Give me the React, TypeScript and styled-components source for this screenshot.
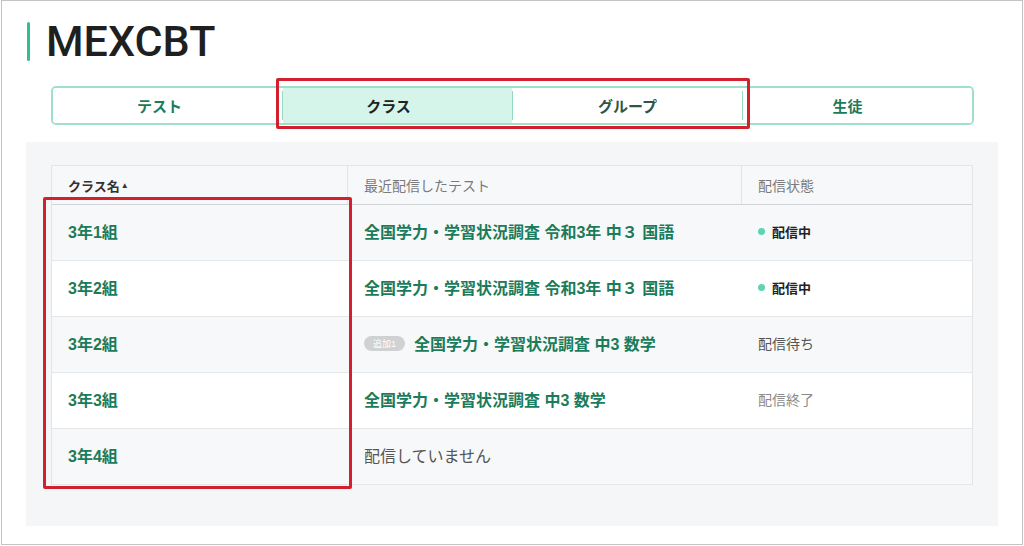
import React from 'react';
import styled, { createGlobalStyle } from 'styled-components';

const GlobalStyle = createGlobalStyle`
  html, body {
    margin: 0;
    padding: 0;
    background: #ffffff;
  }
  body {
    font-family: 'Liberation Sans', 'Noto Sans CJK JP', sans-serif;
  }
`;

type Status = 'live' | 'waiting' | 'ended' | 'none';

interface Row {
  name: string;
  test?: string;
  badge?: string;
  status: Status;
}

const rows: Row[] = [
  { name: '3年1組', test: '全国学力・学習状況調査 令和3年 中３ 国語', status: 'live' },
  { name: '3年2組', test: '全国学力・学習状況調査 令和3年 中３ 国語', status: 'live' },
  { name: '3年2組', test: '全国学力・学習状況調査 中3 数学', badge: '追加1', status: 'waiting' },
  { name: '3年3組', test: '全国学力・学習状況調査 中3 数学', status: 'ended' },
  { name: '3年4組', status: 'none' },
];

const tabs = [
  { label: 'テスト', tone: 'green', shift: -8 },
  { label: 'クラス', tone: 'active', shift: -9 },
  { label: 'グループ', tone: 'dark', shift: 0 },
  { label: '生徒', tone: 'green', shift: -10 },
] as const;

const App: React.FC = () => {
  return (
    <>
      <GlobalStyle />
      <Frame>
        <Header>
          <Bar />
          <Title>MEXCBT</Title>
        </Header>

        <Tabs>
          {tabs.map((t, i) => (
            <React.Fragment key={t.label}>
              {i > 0 && <Divider />}
              <Tab tone={t.tone}>
                <TabLabel shift={t.shift}>{t.label}</TabLabel>
              </Tab>
            </React.Fragment>
          ))}
        </Tabs>

        <Panel>
          <Table>
            <HeadCell strong>
              クラス名<Caret>▲</Caret>
            </HeadCell>
            <HeadCell>最近配信したテスト</HeadCell>
            <HeadCell last>配信状態</HeadCell>

            {rows.map((r, i) => (
              <React.Fragment key={i}>
                <Cell shaded={i % 2 === 0}>
                  <ClassName>{r.name}</ClassName>
                </Cell>
                <Cell shaded={i % 2 === 0}>
                  {r.badge && <Badge>{r.badge}</Badge>}
                  {r.test ? <TestName>{r.test}</TestName> : <Empty>配信していません</Empty>}
                </Cell>
                <Cell shaded={i % 2 === 0}>
                  {r.status === 'live' && (
                    <Live>
                      <Dot />
                      配信中
                    </Live>
                  )}
                  {r.status === 'waiting' && <StatusText tone="#555">配信待ち</StatusText>}
                  {r.status === 'ended' && <StatusText tone="#8a8a8a">配信終了</StatusText>}
                </Cell>
              </React.Fragment>
            ))}
          </Table>
        </Panel>

        <Highlight style={{ left: 274, top: 77, width: 474, height: 51 }} />
        <Highlight style={{ left: 41, top: 196, width: 309, height: 292 }} />
      </Frame>
    </>
  );
};

export default App;

const Frame = styled.div`
  position: relative;
  box-sizing: border-box;
  width: 1022px;
  height: 545px;
  margin: 0 0 0 1px;
  border: 1px solid #c4c4c4;
  background: #ffffff;
  padding-top: 21px;
`;

const Header = styled.div`
  display: flex;
  align-items: center;
  gap: 16px;
  height: 39px;
  margin-left: 25px;
`;

const Bar = styled.div`
  width: 3px;
  height: 39px;
  border-radius: 2px;
  background: #2fbf8c;
`;

const Title = styled.h1`
  margin: 0;
  font-family: Roboto, 'Liberation Sans', sans-serif;
  font-weight: 500;
  font-size: 43px;
  line-height: 1;
  color: #1f1f1f;
`;

const Tabs = styled.div`
  display: flex;
  align-items: stretch;
  box-sizing: border-box;
  height: 39px;
  margin: 25px 48px 0 49px;
  border: 2px solid #9fe0ca;
  border-radius: 5px;
  overflow: hidden;
`;

const Tab = styled.div<{ tone: 'green' | 'active' | 'dark' }>`
  flex: 1;
  display: flex;
  align-items: center;
  justify-content: center;
  font-family: 'Noto Sans CJK JP', sans-serif;
  font-size: 15px;
  font-weight: 700;
  background: ${p => (p.tone === 'active' ? '#d5f5ea' : '#ffffff')};
  color: ${p => (p.tone === 'active' ? '#222222' : p.tone === 'dark' ? '#2e5546' : '#1b7b5a')};
`;

const TabLabel = styled.span<{ shift: number }>`
  margin-left: ${p => p.shift * 2}px;
`;

const Divider = styled.div`
  width: 1px;
  height: 29px;
  align-self: center;
  background: #95d9c2;
`;

const Panel = styled.div`
  box-sizing: border-box;
  width: 972px;
  height: 384px;
  margin: 17px 0 0 24px;
  padding: 23px 25px 0 25px;
  background: #f5f6f7;
`;

const Table = styled.div`
  display: grid;
  grid-template-columns: 296px 394px 230px;
  grid-auto-rows: 56px;
  grid-template-rows: 39px;
  border: 1px solid #e2e5e7;
  border-bottom: none;
  background: #ffffff;
`;

const HeadCell = styled.div<{ strong?: boolean; last?: boolean }>`
  display: flex;
  align-items: center;
  padding: 0 16px;
  background: #f7f8f9;
  border-bottom: 1px solid #cfd3d6;
  border-right: ${p => (p.last ? 'none' : '1px solid #e2e5e7')};
  font-family: 'Liberation Sans', 'Noto Sans CJK JP', sans-serif;
  font-size: ${p => (p.strong ? '13px' : '14px')};
  font-weight: ${p => (p.strong ? 700 : 400)};
  color: ${p => (p.strong ? '#333333' : '#7a7a7a')};
`;

const Caret = styled.span`
  font-size: 8px;
  margin-left: 1px;
  color: #333333;
`;

const Cell = styled.div<{ shaded: boolean }>`
  display: flex;
  align-items: center;
  padding: 0 16px 3px;
  background: ${p => (p.shaded ? '#f7f8f9' : '#ffffff')};
  border-bottom: 1px solid #e4e7e9;
`;

const ClassName = styled.span`
  font-size: 16px;
  font-weight: 700;
  color: #1b7b5a;
`;

const TestName = styled.span`
  font-size: 16px;
  font-weight: 700;
  color: #1b7b5a;
  white-space: nowrap;
`;

const Empty = styled.span`
  font-size: 16px;
  color: #555555;
`;

const Badge = styled.span`
  display: inline-flex;
  align-items: center;
  justify-content: center;
  height: 15px;
  padding: 0 9px;
  margin-right: 9px;
  border-radius: 8px;
  background: #cfd1d2;
  color: #ffffff;
  font-size: 9px;
`;

const Live = styled.span`
  display: inline-flex;
  align-items: center;
  font-size: 13px;
  font-weight: 700;
  color: #222222;
`;

const Dot = styled.span`
  width: 7px;
  height: 7px;
  border-radius: 50%;
  background: #5ed4b5;
  margin-right: 7px;
`;

const StatusText = styled.span<{ tone: string }>`
  font-size: 14px;
  color: ${p => p.tone};
`;

const Highlight = styled.div`
  position: absolute;
  box-sizing: border-box;
  border: 3px solid #d2212d;
  border-radius: 2px;
  pointer-events: none;
`;
